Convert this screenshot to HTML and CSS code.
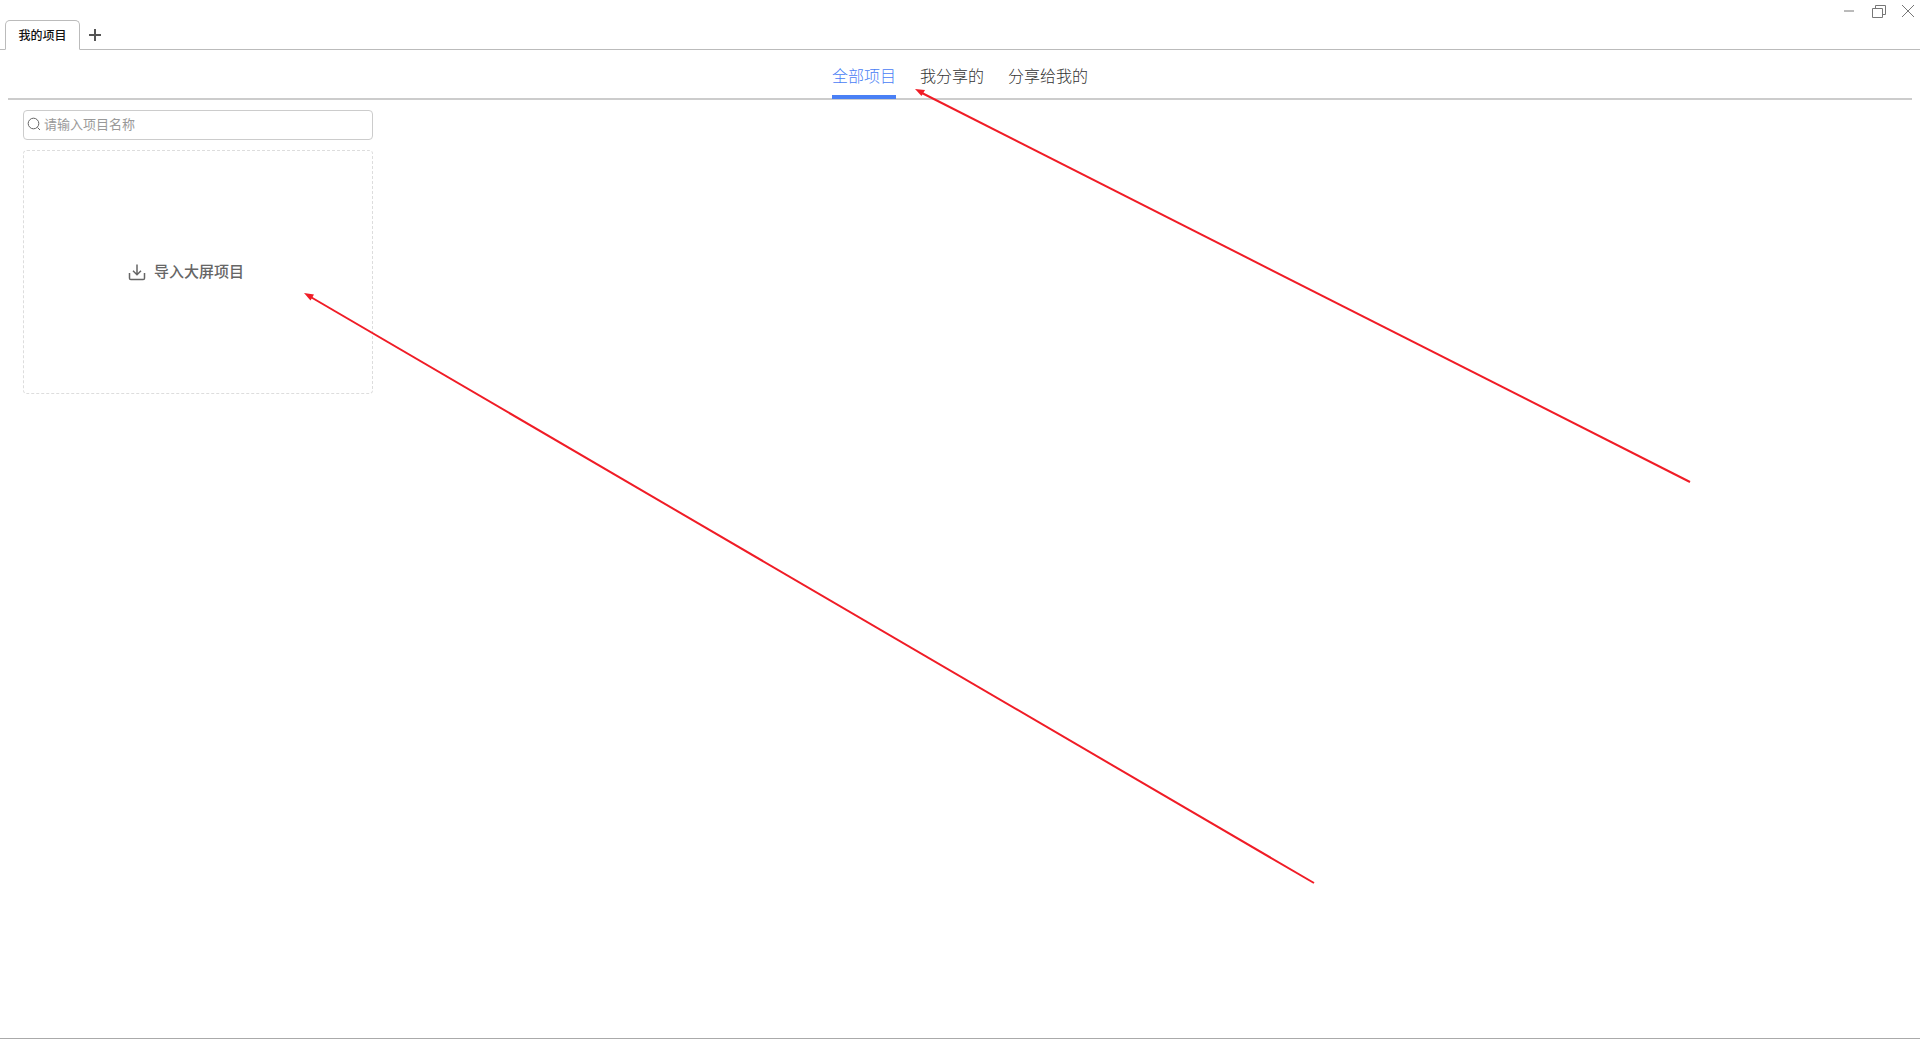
FILE: index.html
```html
<!DOCTYPE html>
<html lang="zh-CN">

<head>
    <meta charset="UTF-8">
    <title>我的项目</title>
    <link rel="stylesheet" href="styles.css">
</head>

<body>
    <div class="window-controls">
        <svg class="win-icon" viewBox="0 0 16 16"><path d="M2 8h10" /></svg>
        <svg class="win-icon" viewBox="0 0 16 16"><path d="M1.500 5.500h10v9h-10zM4.500 5.500v-3h10v9h-3" /></svg>
        <svg class="win-icon" viewBox="0 0 16 16"><path d="M2 2l12 12M14 2L2 14" /></svg>
    </div>

    <div class="tab-bar">
        <div class="tab">我的项目</div>
        <svg class="tab-add" viewBox="0 0 14 14"><path d="M7 1v12M1 7h12" /></svg>
    </div>

    <div class="nav">
        <a class="nav-item active">全部项目</a>
        <a class="nav-item">我分享的</a>
        <a class="nav-item">分享给我的</a>
    </div>

    <div class="content">
        <div class="search">
            <svg class="search-icon" viewBox="0 0 14 14"><circle cx="6.500" cy="6.500" r="5.300" /><path d="M10.500 10.500l2.500 2.500" /></svg>
            <span class="search-text">请输入项目名称</span>
        </div>
        <div class="import-card">
            <svg class="import-icon" viewBox="0 0 18 18"><path d="M9 1.500v10M5 7.800l4 4 4-4M1.500 10v5.200q0 1.300 1.300 1.300h12.400q1.300 0 1.300-1.300V10" /></svg>
            <span>导入大屏项目</span>
        </div>
    </div>

    <!-- annotation arrows -->
    <svg class="arrows" viewBox="0 0 1920 1039">
        <path class="arrow-line" d="M1690 482L920 92" />
        <path class="arrow-head" d="M915 89l10 1-3.500 6z" />
        <path class="arrow-line" d="M1314 883L309 296" />
        <path class="arrow-head" d="M304 293l10 1.500-3.500 6z" />
    </svg>
</body>

</html>
```

FILE: styles.css
```css
html,
body {
    height: 100%;
}

body {
    margin: 0;
    height: 1039px;
    box-sizing: border-box;
    position: relative;
    overflow: hidden;
    background-color: white;
    border-bottom: 1px solid #aaa;
    font-family: "Liberation Sans", "Noto Sans CJK SC", sans-serif;
}

.window-controls {
    position: absolute;
    top: 3px;
    right: 4px;
    display: flex;
    gap: 13px;
}

.win-icon {
    width: 16px;
    height: 16px;
    fill: none;
    stroke: #777;
    stroke-width: 1;
}

.tab-bar {
    height: 49px;
    display: flex;
    align-items: flex-end;
    padding-left: 5px;
    border-bottom: 1px solid #bbb;
}

.tab {
    width: 73px;
    height: 28px;
    margin-bottom: -1px;
    border: 1px solid #bbb;
    border-bottom: 1px solid white;
    border-radius: 5px 5px 0 0;
    background-color: white;
    text-align: center;
    line-height: 31px;
    font-size: 12px;
    font-weight: 500;
    color: #111;
}

.tab-add {
    width: 14px;
    height: 14px;
    margin: 0 0 7px 8px;
    fill: none;
    stroke: #555;
    stroke-width: 2;
}

.nav {
    height: 48px;
    margin: 0 8px;
    display: flex;
    justify-content: center;
    gap: 24px;
    border-bottom: 2px solid #ccc;
}

.nav-item {
    height: 48px;
    line-height: 54px;
    font-size: 16px;
    font-weight: 300;
    color: #333;
}

.nav-item.active {
    height: 45px;
    color: #4a80f5;
    border-bottom: 4px solid #4a80f5;
}

.content {
    padding: 10px 0 0 23px;
    width: 350px;
}

.search {
    height: 28px;
    display: flex;
    align-items: center;
    gap: 3px;
    padding-left: 3px;
    border: 1px solid #ccc;
    border-radius: 4px;
    font-size: 13px;
    color: #999;
}

.search-icon {
    width: 14px;
    height: 14px;
    margin-top: -2px;
    fill: none;
    stroke: #666;
    stroke-width: 1;
}

.search-text {
    margin-top: -3px;
}

.import-card {
    height: 238px;
    margin-top: 10px;
    display: flex;
    align-items: center;
    justify-content: center;
    gap: 8px;
    padding-right: 24px;
    padding-bottom: 4px;
    border: 1px dashed #ddd;
    border-radius: 4px;
    font-size: 15px;
    font-weight: 500;
    color: #666;
}

.import-icon {
    width: 18px;
    height: 18px;
    margin-top: 3px;
    fill: none;
    stroke: #666;
    stroke-width: 1.500;
}

.arrows {
    position: absolute;
    top: 0;
    left: 0;
    width: 1920px;
    height: 1039px;
    pointer-events: none;
}

.arrow-line {
    fill: none;
    stroke: #f01c26;
    stroke-width: 2;
}

.arrow-head {
    fill: #f01c26;
}
```
